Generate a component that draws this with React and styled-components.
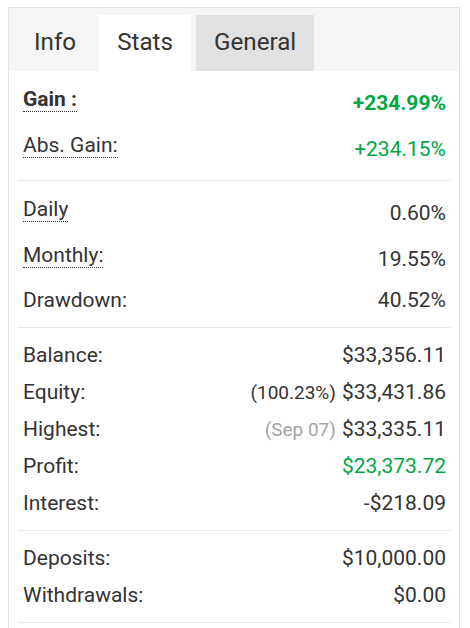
import styled, { createGlobalStyle } from 'styled-components';

const tabs = ['Info', 'Stats', 'General'];

const sections = [
    [
        { label: 'Gain :', value: '+234.99%', dotted: true, bold: true, tone: 'green' },
        { label: 'Abs. Gain:', value: '+234.15%', dotted: true, tone: 'green' },
    ],
    [
        { label: 'Daily', value: '0.60%', dotted: true },
        { label: 'Monthly:', value: '19.55%', dotted: true },
        { label: 'Drawdown:', value: '40.52%' },
    ],
    [
        { label: 'Balance:', value: '$33,356.11' },
        { label: 'Equity:', note: '(100.23%)', value: '$33,431.86' },
        { label: 'Highest:', note: '(Sep 07)', muted: true, value: '$33,335.11' },
        { label: 'Profit:', value: '$23,373.72', tone: 'green' },
        { label: 'Interest:', value: '-$218.09' },
    ],
    [
        { label: 'Deposits:', value: '$10,000.00' },
        { label: 'Withdrawals:', value: '$0.00' },
    ],
];

function App() {
    return (
        <>
            <GlobalStyle />
            <Panel>
                <TabBar>
                    {tabs.map((tab) => (
                        <Tab key={tab} $state={tab === 'Stats' ? 'active' : tab === 'General' ? 'hover' : 'idle'}>
                            {tab}
                        </Tab>
                    ))}
                </TabBar>
                <Body>
                    {sections.map((rows, i) => (
                        <Section key={i}>
                            {rows.map((row) => (
                                <Row key={row.label} $tall={row.dotted}>
                                    <Label $dotted={row.dotted} $bold={row.bold}>{row.label}</Label>
                                    <Value $tone={row.tone} $bold={row.bold}>
                                        {row.note && <Note $muted={row.muted}>{row.note}</Note>}
                                        {row.value}
                                    </Value>
                                </Row>
                            ))}
                        </Section>
                    ))}
                </Body>
            </Panel>
        </>
    );
}

const GlobalStyle = createGlobalStyle`
* {
    box-sizing: border-box;
}
body {
    margin: 7px 10px 0 8px;
    background: #ffffff;
    font-family: Roboto, "Liberation Sans", sans-serif;
    color: #333333;
}
`;

const Panel = styled.div`
width: 452px;
border: 1px solid #e3e3e3;
border-bottom: none;
background: #ffffff;
`;

const TabBar = styled.div`
display: flex;
gap: 5px;
padding: 7px 7px 0 7px;
background: #f5f5f5;
`;

const Tab = styled.div`
height: 56px;
padding: 0 18px;
font-size: 24.2px;
line-height: 54px;
color: #333333;
background: ${(props) => props.$state === 'active' ? '#ffffff' : props.$state === 'hover' ? '#e1e1e1' : 'transparent'};
cursor: pointer;
`;

const Body = styled.div`
padding: 0 8px 12px 9px;
`;

const Section = styled.div`
padding: 9px 0 8px 0;
border-bottom: 1px solid #e9e9e9;
`;

const Row = styled.div`
display: flex;
justify-content: space-between;
align-items: center;
height: ${(props) => props.$tall ? '46px' : '37px'};
padding: 0 5px;
font-size: 21px;
line-height: 23px;
`;

const Label = styled.span`
display: block;
font-weight: ${(props) => props.$bold ? 700 : 400};
border-bottom: ${(props) => props.$dotted ? '1px dotted #333333' : 'none'};
margin-bottom: ${(props) => props.$dotted ? '6px' : '0'};
`;

const Value = styled.span`
display: block;
white-space: nowrap;
font-weight: ${(props) => props.$bold ? 700 : 400};
color: ${(props) => props.$tone === 'green' ? '#00a844' : '#333333'};
`;

const Note = styled.span`
margin-right: 6px;
font-size: 19px;
color: ${(props) => props.$muted ? '#a3a3a3' : '#333333'};
`;

export default App;
